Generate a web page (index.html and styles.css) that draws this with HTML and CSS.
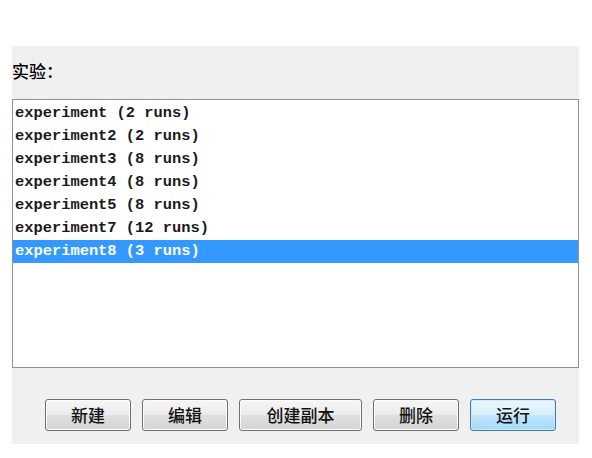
FILE: index.html
```html
<!DOCTYPE html>
<html>
<head>
<meta charset="utf-8">
<link rel="stylesheet" href="styles.css">
</head>
<body>
<div class="panel">
  <div class="label">实验：</div>
  <div class="listbox">
    <div class="row">experiment (2 runs)</div>
    <div class="row">experiment2 (2 runs)</div>
    <div class="row">experiment3 (8 runs)</div>
    <div class="row">experiment4 (8 runs)</div>
    <div class="row">experiment5 (8 runs)</div>
    <div class="row">experiment7 (12 runs)</div>
    <div class="row selected">experiment8 (3 runs)</div>
  </div>
  <div class="buttons">
    <button class="btn">新建</button>
    <button class="btn">编辑</button>
    <button class="btn wide">创建副本</button>
    <button class="btn">删除</button>
    <button class="btn default">运行</button>
  </div>
</div>
</body>
</html>
```

FILE: styles.css
```css
html, body {
  margin: 0;
  padding: 0;
  background: #ffffff;
}
body {
  width: 592px;
  height: 458px;
  overflow: hidden;
}
.panel {
  margin: 46px 0 0 12px;
  width: 567px;
  height: 398px;
  background: #f0f0f0;
  display: flex;
  flex-direction: column;
}
.label {
  font-family: "Noto Sans CJK SC", sans-serif;
  font-size: 17px;
  font-weight: 500;
  line-height: 24px;
  color: #000;
  padding-top: 13px;
  margin-bottom: 16px;
}
.listbox {
  box-sizing: border-box;
  height: 269px;
  background: #ffffff;
  border: 1px solid #8e9298;
  padding-top: 2px;
}
.row {
  height: 23px;
  line-height: 23px;
  padding-left: 2px;
  font-family: "Liberation Mono", monospace;
  font-weight: bold;
  font-size: 15.4px;
  color: #1a1a1a;
  white-space: pre;
}
.row.selected {
  background: #3399ff;
  color: #ffffff;
}
.buttons {
  display: flex;
  gap: 11px;
  padding-left: 33px;
  margin-top: 31px;
}
.btn {
  box-sizing: border-box;
  width: 86px;
  height: 32px;
  padding: 0;
  border: 1px solid #707070;
  border-radius: 3px;
  background: linear-gradient(to bottom, #f6f6f6 0%, #ececec 48%, #dedede 52%, #d6d6d6 100%);
  box-shadow: inset 0 0 0 1px #fcfcfc;
  font-family: "Noto Sans CJK SC", sans-serif;
  font-size: 17px;
  font-weight: 500;
  color: #111;
  line-height: 30px;
}
.btn.wide {
  width: 123px;
}
.btn.default {
  border-color: #3c7fb1;
  background: linear-gradient(to bottom, #eaf6fd 0%, #d9f0fc 48%, #bee6fd 52%, #a7d9f5 100%);
  box-shadow: inset 0 0 0 1px #cfeafc;
}
```
